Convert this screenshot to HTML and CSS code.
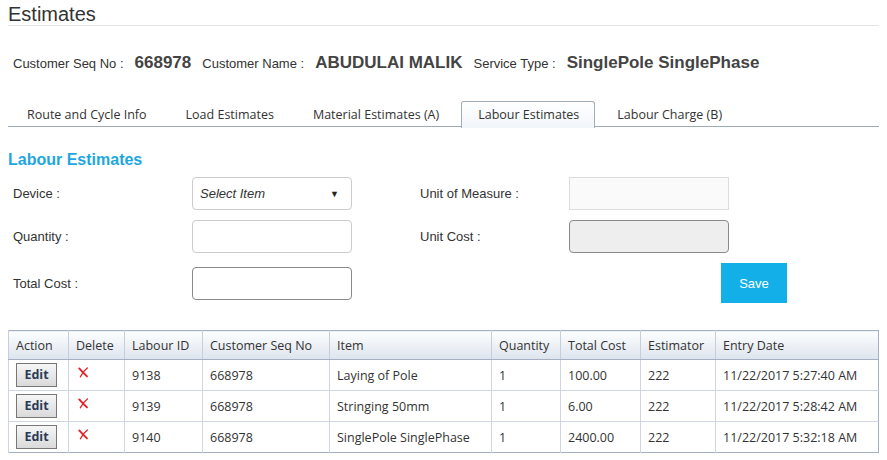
FILE: index.html
```html
<!DOCTYPE html>
<html>
<head>
<meta charset="utf-8">
<link rel="stylesheet" href="styles.css">
</head>
<body>
<div class="page">
  <h1 class="title">Estimates</h1>

  <div class="info">
    <span class="lbl">Customer Seq No :</span><span class="val">668978</span>
    <span class="lbl">Customer Name :</span><span class="val">ABUDULAI MALIK</span>
    <span class="lbl">Service Type :</span><span class="val">SinglePole SinglePhase</span>
  </div>

  <div class="tabs">
    <div class="tab">Route and Cycle Info</div>
    <div class="tab">Load Estimates</div>
    <div class="tab">Material Estimates (A)</div>
    <div class="tab active">Labour Estimates</div>
    <div class="tab">Labour Charge (B)</div>
  </div>

  <h2 class="section">Labour Estimates</h2>

  <div class="form">
    <label class="flabel">Device :</label>
    <div class="select"><span>Select Item</span><span class="caret">&#9660;</span></div>
    <span></span>
    <label class="flabel right">Unit of Measure :</label>
    <div class="input plain"></div>
    <span></span>

    <label class="flabel">Quantity :</label>
    <div class="input"></div>
    <span></span>
    <label class="flabel right">Unit Cost :</label>
    <div class="input disabled"></div>
    <span></span>

    <label class="flabel">Total Cost :</label>
    <div class="input dark"></div>
    <span></span>
    <span></span>
    <button class="save">Save</button>
  </div>

  <table class="grid">
    <thead>
      <tr>
        <th class="c1">Action</th><th class="c2">Delete</th><th class="c3">Labour ID</th><th class="c4">Customer Seq No</th><th class="c5">Item</th><th class="c6">Quantity</th><th class="c7">Total Cost</th><th class="c8">Estimator</th><th class="c9">Entry Date</th>
      </tr>
    </thead>
    <tbody>
      <tr>
        <td><span class="edit">Edit</span></td>
        <td><svg class="x" width="12" height="11" viewBox="0 0 12 11"><path d="M2.2 1.4 Q5 4.6 10 9.4" fill="none" stroke="#e0252b" stroke-width="1.9" stroke-linecap="round"/><path d="M10.4 1 Q6.2 4 3.4 9.8" fill="none" stroke="#e0252b" stroke-width="1.4" stroke-linecap="round"/></svg></td>
        <td>9138</td><td>668978</td><td>Laying of Pole</td><td>1</td><td>100.00</td><td>222</td><td>11/22/2017 5:27:40 AM</td>
      </tr>
      <tr>
        <td><span class="edit">Edit</span></td>
        <td><svg class="x" width="12" height="11" viewBox="0 0 12 11"><path d="M2.2 1.4 Q5 4.6 10 9.4" fill="none" stroke="#e0252b" stroke-width="1.9" stroke-linecap="round"/><path d="M10.4 1 Q6.2 4 3.4 9.8" fill="none" stroke="#e0252b" stroke-width="1.4" stroke-linecap="round"/></svg></td>
        <td>9139</td><td>668978</td><td>Stringing 50mm</td><td>1</td><td>6.00</td><td>222</td><td>11/22/2017 5:28:42 AM</td>
      </tr>
      <tr>
        <td><span class="edit">Edit</span></td>
        <td><svg class="x" width="12" height="11" viewBox="0 0 12 11"><path d="M2.2 1.4 Q5 4.6 10 9.4" fill="none" stroke="#e0252b" stroke-width="1.9" stroke-linecap="round"/><path d="M10.4 1 Q6.2 4 3.4 9.8" fill="none" stroke="#e0252b" stroke-width="1.4" stroke-linecap="round"/></svg></td>
        <td>9140</td><td>668978</td><td>SinglePole SinglePhase</td><td>1</td><td>2400.00</td><td>222</td><td>11/22/2017 5:32:18 AM</td>
      </tr>
    </tbody>
  </table>
</div>
</body>
</html>
```

FILE: styles.css
```css
html, body {
  margin: 0;
  padding: 0;
  background: #ffffff;
}
.page {
  padding: 0 8px;
  width: 871px;
  font-family: "Liberation Sans", Arial, sans-serif;
  color: #333333;
}
.title {
  margin: 0;
  padding-top: 3px;
  height: 22px;
  font-size: 20px;
  font-weight: normal;
  line-height: 22px;
  color: #333333;
  border-bottom: 1px solid #e3e3e3;
}
.info {
  display: flex;
  align-items: baseline;
  margin-top: 27px;
  padding-left: 5px;
  height: 20px;
}
.info .lbl {
  font-size: 13px;
  color: #333;
  margin-right: 11px;
}
.info .val {
  font-size: 17px;
  font-weight: bold;
  color: #444;
  margin-right: 11px;
}
.tabs {
  display: flex;
  margin-top: 28px;
  padding-left: 0;
  height: 25px;
  border-bottom: 1px solid #9ea9b6;
  font-family: "Open Sans", "Noto Sans", sans-serif;
  font-size: 12.5px;
}
.tab {
  padding: 0 19px 0 18px;
  line-height: 26px;
  height: 25px;
  color: #333;
  border: 1px solid transparent;
  border-bottom: none;
  white-space: nowrap;
}
.tab.active {
  background: linear-gradient(#ffffff, #f1f6fa);
  border-color: #a3adb9;
  border-radius: 3px 3px 0 0;
  margin: 0 3px -1px 2px;
  padding: 0 15px 0 16px;
  height: 26px;
}
.section {
  margin: 24px 0 0 0;
  font-size: 16px;
  font-weight: bold;
  line-height: 18px;
  color: #1ea7de;
}
.form {
  display: grid;
  grid-template-columns: 184px 160px 68px 149px 160px 58px;
  grid-template-rows: 33px 33px 40px;
  row-gap: 10px;
  margin-top: 8px;
  align-items: center;
}
.flabel {
  padding-left: 5px;
  font-size: 13px;
  color: #333;
}
.flabel.right {
  padding-left: 0;
}
.select, .input {
  box-sizing: border-box;
  height: 33px;
  border: 1px solid #cccccc;
  border-radius: 4px;
  background: #fff;
}
.select {
  display: flex;
  align-items: center;
  justify-content: space-between;
  padding: 0 12px 0 7px;
  font-size: 13px;
  font-style: italic;
  color: #333;
}
.caret {
  font-style: normal;
  font-size: 9px;
  color: #222;
}
.input.plain {
  border-radius: 0;
  border-color: #dddddd;
  background: #fafafa;
}
.input.disabled {
  background: #eeeeee;
  border-color: #8a8a8a;
}
.input.dark {
  border-color: #8a8a8a;
}
.save {
  grid-column: 5 / 7;
  justify-self: end;
  width: 66px;
  height: 40px;
  border: none;
  background: #13afe8;
  color: #fff;
  font-family: "Liberation Sans", Arial, sans-serif;
  font-size: 13px;
  padding: 0;
}
.grid {
  margin-top: 27px;
  width: 871px;
  border-collapse: collapse;
  border: 1px solid #a4b0c2;
  font-family: "Open Sans", "Noto Sans", sans-serif;
  font-size: 12.5px;
  color: #333;
}
.grid th {
  height: 28px;
  padding: 0 0 0 7px;
  text-align: left;
  font-weight: normal;
  background: linear-gradient(#fdfeff, #dde4ed);
  border-left: 1px solid #c5cedb;
  border-bottom: 1px solid #a4b0c2;
}
.grid td {
  height: 30px;
  padding: 0 0 0 7px;
  border-left: 1px solid #cfd6e2;
  border-top: 1px solid #cfd6e2;
}
.grid .c1 { width: 52px; }
.grid .c2 { width: 48px; }
.grid .c3 { width: 70px; }
.grid .c4 { width: 119px; }
.grid .c5 { width: 154px; }
.grid .c6 { width: 61px; }
.grid .c7 { width: 72px; }
.grid .c8 { width: 67px; }
.edit {
  display: inline-block;
  box-sizing: border-box;
  width: 41px;
  height: 24px;
  line-height: 22px;
  text-align: center;
  border: 1px solid #777;
  background: linear-gradient(#f6f6f6, #dadada);
  font-weight: bold;
  color: #2b3b57;
  vertical-align: middle;
}
.x {
  display: block;
  margin-left: 1px;
  margin-top: -5px;
}
```
